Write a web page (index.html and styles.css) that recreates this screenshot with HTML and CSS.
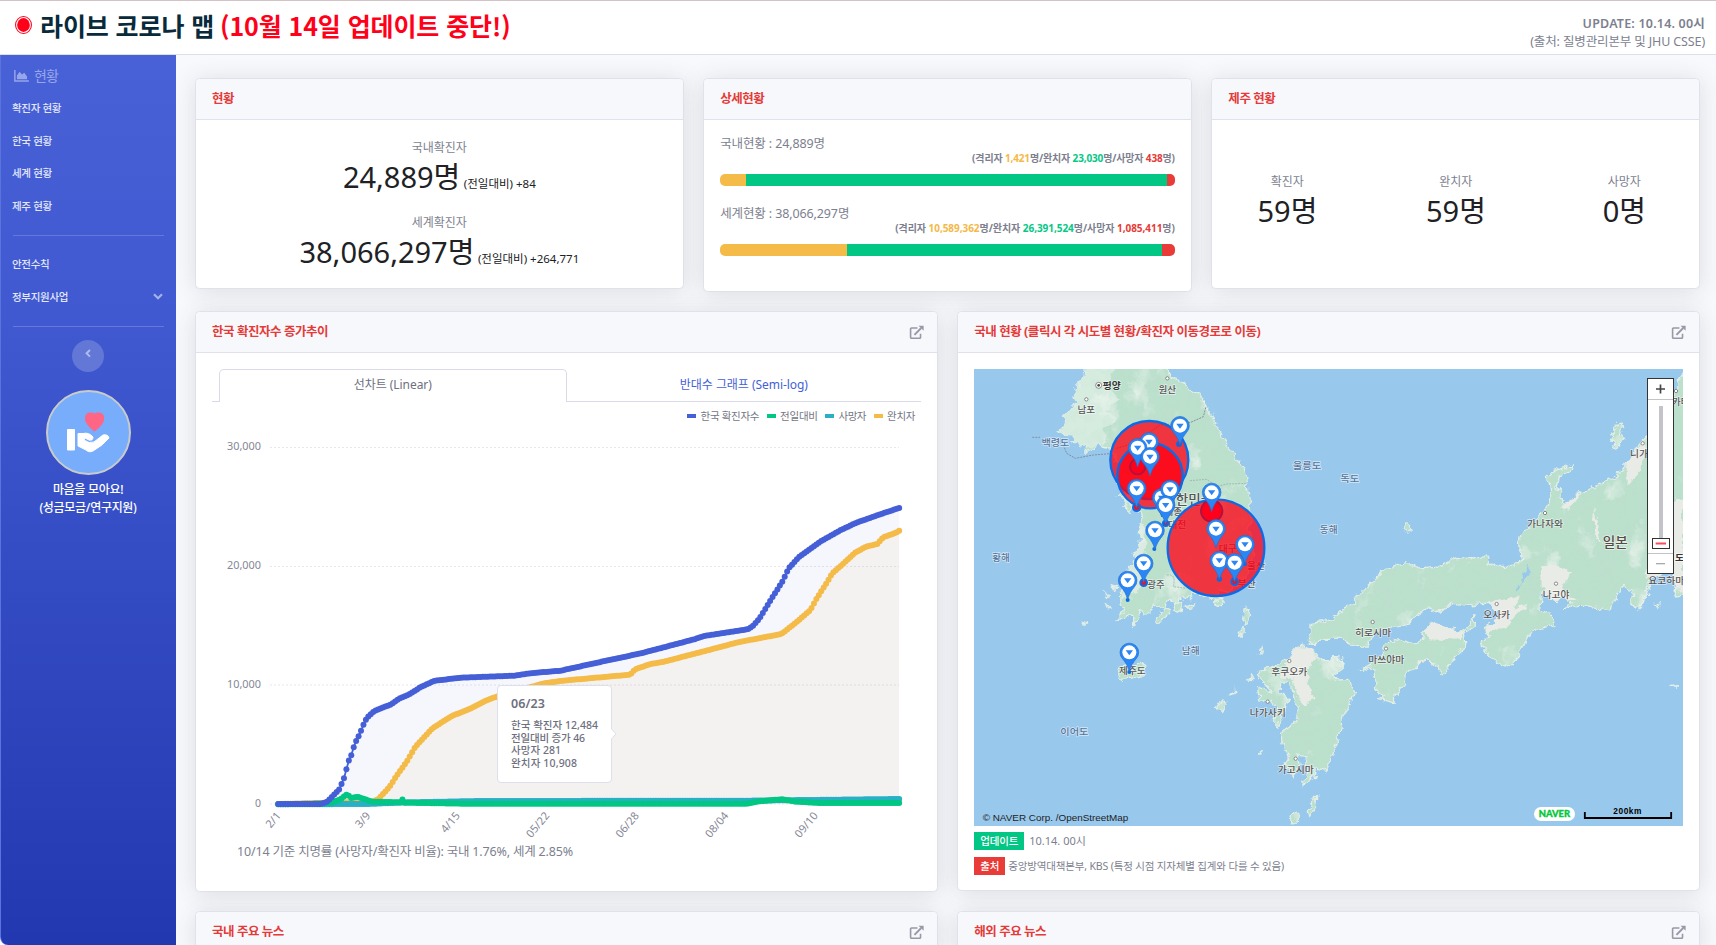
FILE: index.html
```html
<!DOCTYPE html>
<html lang="ko">
<head>
<meta charset="utf-8">
<title>라이브 코로나 맵</title>
<link rel="stylesheet" href="styles.css">
</head>
<body>
<svg width="0" height="0" class="defs">
  <symbol id="ext" viewBox="0 0 16 16"><path d="M9 3.2H2.7q-1 0-1 1v9q0 1 1 1h8.6q1 0 1-1V9.2" fill="none" stroke="currentColor" stroke-width="1.7"/><path d="M5.8 10.6 13 3.2" stroke="currentColor" stroke-width="2"/><path d="M10.2.8H15.6V6.2Z" fill="currentColor"/></symbol>
  <symbol id="pin" viewBox="-32 -32 64 96" overflow="visible"><path d="M0 58C-5 40-11 31-20 20A28 28 0 1 1 20 20C11 31 5 40 0 58Z" fill="#2a85f5" stroke="#2470c8" stroke-width="2"/><circle r="21" fill="#fff"/><path d="M-11-6H11L0 9Z" fill="#2a85f5"/></symbol>
</svg>
<header class="top">
  <h1><svg class="live" viewBox="0 0 16 17"><ellipse cx="8" cy="8.5" rx="7.5" ry="8" fill="none" stroke="#ff0019" stroke-width="1"/><ellipse cx="8" cy="8.5" rx="6" ry="6.5" fill="#ff0019"/></svg><span class="t1">라이브 코로나 맵</span><span class="t2">(10월 14일 업데이트 중단!)</span></h1>
  <div class="upd"><b>UPDATE: 10.14. 00시</b><span>(출처: 질병관리본부 및 JHU CSSE)</span></div>
</header>
<div class="wrap">
<nav class="side">
  <div class="nh"><svg viewBox="0 0 16 13"><path d="M0 0H1.6V11H16V12.6H0Z" fill="currentColor"/><path d="M3 10V6L6 2 8.5 5 11 3 14 7V10Z" fill="currentColor"/></svg>현황</div>
  <a>확진자 현황</a><a>한국 현황</a><a>세계 현황</a><a>제주 현황</a>
  <hr>
  <a>안전수칙</a><a class="more">정부지원사업<svg viewBox="0 0 10 7"><path d="M1 1.2 5 5.2 9 1.2" fill="none" stroke="currentColor" stroke-width="2.2"/></svg></a>
  <hr class="h2">
  <div class="tog"><svg viewBox="0 0 6 9"><path d="M5 1 1.6 4.3 5 7.6" fill="none" stroke="currentColor" stroke-width="2"/></svg></div>
  <svg class="give" viewBox="0 0 85 85"><circle cx="42.5" cy="42.5" r="41.5" fill="#77adfb" stroke="#c9cbca" stroke-width="2"/><path d="M21.500 39.500h7V60h-7z" fill="#fff" stroke="#fff" stroke-linejoin="round"/><path d="M32 43.500H37Q43 42 47 47Q47 51 43 50L39 48L38 50Q43 54 48 52L57 45Q62 44 63 48Q56 56 50 59Q44 64 40 60L32 56Z" fill="#fff" stroke="#fff" stroke-width="1" stroke-linejoin="round"/><path d="M48.500 41.500Q38 34 39 27Q40 22 45 22.500Q47 22.500 48.500 23.500Q50 22.500 52 22.500Q57 22 58.200 27Q59 34 48.500 41.500Z" fill="#ff6584"/></svg>
  <p>마음을 모아요!<br>(성금모금/연구지원)</p>
</nav>
<main>
  <div class="row r3">
    <section class="card c1"><h2>현황</h2><div class="tot">
      <small>국내확진자</small><div class="num"><span class="n">24,889</span><span class="k">명</span><span class="d">(전일대비) +84</span></div>
      <small class="s2">세계확진자</small><div class="num"><span class="n">38,066,297</span><span class="k">명</span><span class="d">(전일대비) +264,771</span></div>
    </div></section>
    <section class="card c2"><h2>상세현황</h2><div class="det">
      <div class="lb">국내현황 : <span>24,889</span>명</div>
      <div class="sub s1">(격리자 <i class="y">1,421</i>명/완치자 <i class="g">23,030</i>명/사망자 <i class="r">438</i>명)</div>
      <div class="bar"><i style="width:5.7%"></i><i style="width:92.5%"></i><i style="width:1.8%"></i></div>
      <div class="lb">세계현황 : <span>38,066,297</span>명</div>
      <div class="sub">(격리자 <i class="y">10,589,362</i>명/완치자 <i class="g">26,391,524</i>명/사망자 <i class="r">1,085,411</i>명)</div>
      <div class="bar"><i style="width:27.9%"></i><i style="width:69.2%"></i><i style="width:2.9%"></i></div>
    </div></section>
    <section class="card c1"><h2>제주 현황</h2><div class="jeju">
      <div><small>확진자</small><div class="num"><span class="n">59</span><span class="k">명</span></div></div>
      <div><small>완치자</small><div class="num"><span class="n">59</span><span class="k">명</span></div></div>
      <div><small>사망자</small><div class="num"><span class="n">0</span><span class="k">명</span></div></div>
    </div></section>
  </div>
  <div class="row r2">
    <section class="card big"><h2>한국 확진자수 증가추이<svg><use href="#ext"/></svg></h2>
      <div class="body">
        <div class="tabs"><b></b><span class="on">선차트 (Linear)</span><span>반대수 그래프 (Semi-log)</span></div>
        <svg class="chart" viewBox="212 402 710 436" id="chart">
          <g id="legend"></g><g id="plot"></g>
          <g id="tip"><path d="M501 685.500H608Q611.500 685.500 611.500 689V729L616 734L611.500 739V779Q611.500 782.500 608 782.500H501Q497.500 782.500 497.500 779V689Q497.500 685.500 501 685.500Z" fill="#fff" stroke="#dddfeb"/>
          <text x="511" y="708" class="tt" textLength="34">06/23</text>
          <text x="511" y="729" textLength="87">한국 확진자 12,484</text><text x="511" y="741.500" textLength="74">전일대비 증가 46</text><text x="511" y="754" textLength="50">사망자 281</text><text x="511" y="767" textLength="66">완치자 10,908</text></g>
        </svg>
        <p class="fat">10/14 기준 치명률 (사망자/확진자 비율): 국내 1.76%, 세계 2.85%</p>
      </div></section>
    <section class="card map"><h2><span class="w">국내 현황 (클릭시 각 시도별 현황/확진자 이동경로로 이동)</span><svg><use href="#ext"/></svg></h2>
      <div class="body">
      <svg class="mapv" viewBox="42 177 2127 1371">
        <defs>
          <filter id="rough" x="-5%" y="-5%" width="110%" height="110%"><feTurbulence type="fractalNoise" baseFrequency=".045" numOctaves="3" seed="4"/><feDisplacementMap in="SourceGraphic" scale="26" xChannelSelector="R" yChannelSelector="G"/></filter>
          <filter id="relief" x="0" y="0" width="100%" height="100%"><feTurbulence type="fractalNoise" baseFrequency=".012 .009" numOctaves="5" seed="9"/><feColorMatrix values="0 0 0 0 .91  0 0 0 0 .93  0 0 0 0 .9  4 0 0 0 -2.450"/></filter>
          <filter id="shade" x="0" y="0" width="100%" height="100%"><feTurbulence type="fractalNoise" baseFrequency=".03" numOctaves="4" seed="2"/><feColorMatrix values="0 0 0 0 .55  0 0 0 0 .75  0 0 0 0 .65  0 2 0 0 -.9"/></filter>
          <path id="land" d="M380 165L375 200L350 225L342 262L352 278L335 290L312 318L322 330L310 350L290 362L310 372L345 375L330 395L355 395L365 415L385 400L372 428L400 415L410 398L430 410L450 415L460 440L480 470L470 510L500 540L470 560L500 565L490 590L510 610L520 590L540 610L545 640L535 670L550 680L530 700L545 712L520 730L525 755L505 770L510 790L490 800L495 830L478 850L480 880L490 905L470 930L490 925L515 915L515 945L530 935L545 900L555 920L575 905L580 880L610 900L625 870L650 880L660 860L680 870L700 850L730 850L760 870L780 865L775 840L800 845L830 830L850 810L870 770L885 740L870 710L880 690L865 660L872 620L870 570L860 520L850 480L820 430L785 380L760 330L735 275L690 235L670 215L640 205L615 165Z
          M470 1098L482 1073L515 1062L550 1060L562 1072L545 1095L515 1104L482 1108Z M852 900L873 893L868 925L855 945L848 930Z M838 965L853 948L852 970L842 980Z
          M1000 1020L1030 1003L1055 1015L1070 1040L1100 1055L1125 1042L1150 1048L1145 1085L1120 1095L1135 1110L1165 1108L1185 1150L1165 1190L1145 1220L1135 1280L1115 1340L1100 1380L1070 1370L1065 1400L1025 1425L1042 1390L1035 1340L1012 1335L1018 1375L1000 1400L975 1370L985 1340L965 1290L965 1270L990 1250L1010 1225L1015 1190L1000 1150L985 1118L962 1120L960 1145L985 1165L975 1200L955 1250L940 1230L950 1200L930 1170L900 1170L895 1130L925 1140L940 1150L910 1115L888 1100L900 1080L925 1075L960 1060L985 1045Z
          M1048 1000L1050 940L1090 935L1115 930L1150 895L1170 885L1225 825L1270 780L1310 765L1340 758L1360 775L1440 768L1490 745L1540 750L1580 735L1590 758L1615 770L1660 768L1685 745L1675 700L1695 660L1740 620L1765 580L1772 540L1762 500L1780 485L1840 462L1830 482L1795 505L1788 530L1805 540L1802 570L1830 580L1855 550L1920 525L1965 500L2010 450L2035 400L2070 370L2140 300L2150 230L2169 177H2190V850L2145 855L2150 820L2130 775L2100 795L2075 800L2060 850L2050 880L2030 900L2015 880L2018 840L1990 830L1965 870L1945 900L1900 890L1860 885L1830 895L1810 895L1840 878L1800 862L1790 880L1770 860L1745 850L1740 895L1780 920L1788 945L1740 955L1700 985L1675 1040L1650 1068L1610 1060L1570 1015L1565 1000L1585 980L1570 955L1600 940L1620 910L1580 880L1520 885L1480 880L1440 910L1400 895L1340 940L1300 950L1240 970L1225 1005L1190 1010L1140 985L1090 985L1070 1000Z
          M1290 990L1310 985L1345 1000L1380 995L1390 965L1420 940L1470 955L1510 965L1515 1015L1470 1055L1452 1100L1430 1070L1400 1050L1365 1070L1340 1085L1335 1120L1310 1145L1305 1178L1262 1170L1268 1155L1242 1140L1250 1105L1235 1070L1200 1082L1235 1060L1270 1025Z
          M1515 960L1545 910L1542 950L1525 963Z M1980 340L1985 350L1978 375L1990 385L1978 405L1958 415L1962 395L1955 370Z M1333 655Q1335 643 1345 645Q1356 650 1352 665Q1338 668 1333 655Z M986 1523L1000 1508L1018 1520L1012 1540L995 1538Z M1055 1470L1070 1460L1066 1490L1050 1520L1045 1505Z M768 1195L780 1175L800 1180L785 1198Z M813 1155L825 1138L833 1146Z M896 1020L905 1012L910 1026L900 1032Z M895 1335L910 1320L902 1335Z M866 1110L880 1090L875 1112Z M590 930L610 900L630 905L600 940Z M640 880L665 875L660 905L645 900Z M680 890L700 882L695 900Z M755 880L785 865L778 890Z M435 850L448 858L440 864Z M440 880L455 890L445 896Z M455 825L470 830L465 842Z M370 935L378 938L372 942Z M2085 880L2100 885L2094 895Z M2135 1125L2150 1130L2145 1135Z"/>
          <clipPath id="lc"><use href="#land"/></clipPath>
        </defs>
        <rect x="42" y="177" width="2127" height="1371" fill="#99c8ed"/>
        <g filter="url(#rough)">
          <use href="#land" fill="#bbe0cc" stroke="#e2eee6" stroke-width="4"/>
          <g clip-path="url(#lc)">
            <path d="M320 170H470L440 220L480 270L440 300L470 330L430 350L440 400L300 430Z" fill="#d5ecdf"/>
            <path d="M450 400L500 560L530 700L480 870L540 840L560 700L530 560Z" fill="#dcebe2"/>
            <rect x="42" y="177" width="2127" height="1371" filter="url(#relief)" opacity=".75"/>
            <rect x="42" y="177" width="2127" height="1371" filter="url(#shade)" opacity=".3"/>
            <g fill="#e9ebe6"><path d="M1000 1020L1050 1000L1070 1050L1040 1090L1060 1160L1030 1190L1010 1150L1000 1110L960 1100Z"/><path d="M1745 770L1800 765L1840 790L1800 830L1850 870L1750 870Z"/><path d="M1570 880L1680 860L1660 900L1700 880L1640 950L1570 970L1600 920Z"/><path d="M2080 600L2169 560V850L2060 800Z"/><path d="M1800 590L1860 545L1830 600Z"/><path d="M2000 460L2060 380L2040 480L2000 530Z"/><path d="M1905 590L1925 700L1900 670Z"/><path d="M1390 960L1430 935L1510 970L1500 990L1410 985Z"/><path d="M1370 1055L1400 1048L1430 1060L1380 1065Z"/><path d="M1300 960L1450 890L1480 880L1350 960Z"/></g>
          </g>
          <path d="M1685 820L1690 790L1706 772L1705 795L1688 815L1672 845L1665 838Z" fill="#99c8ed"/>
        </g>
        <path d="M217 382H240M310 405L320 430L346 445L400 435L450 431M470 415L520 400L600 345L690 338L730 320L738 290" fill="none" stroke="#8090a0" stroke-width="3" stroke-dasharray="6 3"/>
        <path d="M690 512L740 508L770 530L800 522L862 520M620 795Q650 790 640 830L680 835" fill="none" stroke="#9ab5a8" stroke-width="2.500" stroke-dasharray="6 3"/>
        <g id="labels"></g>
        <g id="zones"></g>
        <g id="pins"></g>
        <g class="ctl"><rect x="2062.500" y="205.500" width="78" height="585" fill="#fff" stroke="#333" stroke-width="3"/><path d="M2064 268.500H2139M2064 730.500H2139" stroke="#c4c4c8" stroke-width="3"/><path d="M2088 237H2115M2101.500 223.500V250.500" stroke="#444" stroke-width="5"/><path d="M2088 761H2115" stroke="#aaa" stroke-width="4"/><rect x="2097" y="288" width="12" height="400" fill="#c2c4c9"/><rect x="2077.500" y="685.500" width="51" height="30" fill="#fff" stroke="#333" stroke-width="3"/><path d="M2087 700.500H2118" stroke="#ff4b58" stroke-width="6"/></g>
        <text class="copy" x="68" y="1532" textLength="437" lengthAdjust="spacingAndGlyphs">© NAVER Corp. /OpenStreetMap</text>
        <rect x="1722" y="1491" width="123" height="42" rx="21" fill="#fff"/>
        <text class="nav" x="1736" y="1521" textLength="94" lengthAdjust="spacingAndGlyphs">NAVER</text>
        <text class="km" x="2002" y="1511" text-anchor="middle" textLength="84">200km</text>
        <path d="M1874.500 1506V1524H2133.500V1506" fill="none" stroke="#000" stroke-width="5.500"/>
      </svg>
      <div class="src"><b class="ok">업데이트</b><span class="a">10.14. 00시</span></div>
      <div class="src"><b class="bad">출처</b><span>중앙방역대책본부, KBS (특정 시점 지자체별 집계와 다를 수 있음)</span></div>
      </div></section>
  </div>
  <div class="row last">
    <section class="card news"><h2>국내 주요 뉴스<svg><use href="#ext"/></svg></h2></section>
    <section class="card news"><h2>해외 주요 뉴스<svg><use href="#ext"/></svg></h2></section>
  </div>
</main>
</div>
<script src="app.js"></script>
</body>
</html>
```

FILE: styles.css
```css
*{box-sizing:border-box}
body{margin:0;height:945px;overflow:hidden;background:#f8f9fc;color:#7d7f8f;font-family:"Noto Sans","Noto Sans CJK KR",sans-serif;font-size:12px;line-height:18px}
.defs{position:absolute}
h1,h2,p{margin:0}
i{font-style:normal}
.top{height:55px;background:#fff;border-top:1px solid #d3c3c4;border-bottom:1px solid #dddfeb;display:flex;justify-content:space-between;padding:0 11px 0 15px}
.top h1{display:flex;align-items:center;height:48px;font:700 25px/48px "Noto Sans CJK KR",sans-serif;letter-spacing:-.1px;white-space:nowrap}
.live{width:17px;height:18px;margin-right:8px}
.t1{color:#082a3a;margin-right:6px}
.t2{color:#ff0019}
.upd{display:flex;flex-direction:column;text-align:right;padding-top:14px;white-space:nowrap;font-size:12.500px}
.upd b{font-weight:600;letter-spacing:.2px}
.upd span{letter-spacing:-.13px}
.wrap{display:flex;height:890px}
.side{width:176px;flex:none;background:linear-gradient(#4861d7,#4059d0 30%,#2238b0);border-left:1px solid #5b74dd;border-bottom-left-radius:8px;color:#e3e7fa;padding:11px 12px 0 11px}
.nh{display:flex;align-items:center;gap:5px;font-size:14px;height:20px;color:#97a5ea;letter-spacing:-.9px;margin-bottom:6px;padding-left:2px}
.nh svg{width:15px;height:12px}
.side a{display:flex;align-items:center;justify-content:space-between;height:32.6px;font-size:10.500px;font-weight:500;letter-spacing:-.3px}
.more svg{width:10px;height:7px;color:#a5b1ea;margin-right:1px}
.side hr{border:0;border-top:1px solid #6679d9;margin:12.500px 0 12px 1px}
.side .h2{margin:12.500px 0 13px 1px}
.tog{width:32px;height:32px;border-radius:50%;background:#6277d6;margin:0 auto;display:flex;justify-content:center;padding:9.500px 0;color:#aebaf0}
.tog svg{width:6px;height:9px}
.give{display:block;width:85px;height:85px;margin:18px auto 6px}
.side p{text-align:center;color:#fff;font-size:12px;font-weight:500;line-height:18px;letter-spacing:-.3px}
main{flex:1;min-width:0;padding:23px 16px 0 19px;display:flex;flex-direction:column;overflow:hidden}
.row{display:grid;column-gap:19.500px;flex:none;align-items:start}
.r3{grid-template-columns:repeat(3,minmax(0,1fr));height:233px}
.r2{grid-template-columns:repeat(2,minmax(0,1fr));height:600px}
.last{grid-template-columns:repeat(2,minmax(0,1fr));height:34px}
.card{background:#fff;border:1px solid #dfe1ed;border-radius:4.500px;box-shadow:0 2px 23px rgba(58,59,69,.15)}
.card h2{height:41px;background:#f7f8fc;border-bottom:1px solid #dfe1ed;border-radius:4px 4px 0 0;padding:0 13px 0 16px;display:flex;align-items:center;justify-content:space-between;font-size:12.500px;font-weight:700;letter-spacing:-.45px;color:#e53a37}
.card h2 svg{width:15px;height:15px;color:#9799a6}
.c1{height:211px}.c2{height:214px}
small{display:block;font-size:12px;line-height:18px;letter-spacing:-.05px}
.tot{text-align:center;padding-top:19px}
.num{height:43px;line-height:43px;margin-top:-2px;color:#202124;white-space:nowrap;display:flex;justify-content:center;align-items:baseline}
.n{font-size:29px;letter-spacing:0}
.k{font-size:29px;letter-spacing:-.5px}
.d{font-size:11.500px;letter-spacing:0;margin-left:4px}
.s2{margin-top:16px}
.det{padding:15px 16px 0;white-space:nowrap}
.lb{font-size:12.500px;height:18px;letter-spacing:-.12px}
.sub{text-align:right;font-size:10px;font-weight:700;height:13px;line-height:11px;letter-spacing:-.05px}
.s1{letter-spacing:-.15px}
.y{color:#f4b947}.g{color:#05c786}.r{color:#e53a37}
.bar{height:12px;margin:8px 0 18.500px;border-radius:5px;overflow:hidden;display:flex}
.bar i:nth-child(1){background:#f5bb48}.bar i:nth-child(2){background:#02c684}.bar i:nth-child(3){background:#e93b37}
.jeju{display:grid;grid-template-columns:repeat(3,168.500px);justify-content:center;text-align:center;padding-top:53px}
.big{height:581px}.map{height:580px}
.body{padding:16px 16px 0}
.tabs{display:grid;grid-template-columns:6.500px 348.500px 1fr;height:33px;text-align:center;line-height:32px;font-size:12px;color:#6e707e;letter-spacing:-.05px}
.tabs>*{border-bottom:1px solid #dad9e8}
.tabs .on{border:1px solid #dad9e8;border-bottom:0;border-radius:5px 5px 0 0;line-height:30px}
.tabs span:last-child{color:#435fd7}
.chart{display:block;width:710px;height:436px;overflow:visible}
.chart text{font-size:11px;fill:#858796}
#legend text{font-size:10.500px;fill:#747684}
#tip text{font-size:10.500px;font-weight:500;fill:#6e707e}
#tip .tt{font-size:12.500px;font-weight:600}
.fat{margin:5px 0 0 25px;font-size:12.500px;letter-spacing:-.18px}
.mapv{display:block;width:709px;height:457px}
.mapv text{font-family:"Noto Sans CJK KR",sans-serif}
.mapv .copy{font:29px "Liberation Sans",Arial,sans-serif;fill:#222}
.mapv .nav{font:900 28px Lato,sans-serif;fill:#03c73c;stroke:#03c73c;stroke-width:1}
.mapv .km{font:700 25px "Liberation Sans",Arial,sans-serif}
.src{display:flex;align-items:center;height:18px;margin:6px 0 7px;font-size:10.500px;letter-spacing:-.16px;white-space:nowrap}
.src b{color:#fff;height:18px;line-height:18px;font-weight:500;padding:0 6px;margin-right:3px}
.ok{background:#02c684}.bad{background:#e93b37}
.src .a{margin-left:2px;font-size:11px;letter-spacing:0}
```

FILE: app.js
```js
const NS = 'http://www.w3.org/2000/svg';
function el(parent, name, attrs, text) {
  const e = document.createElementNS(NS, name);
  for (const k in attrs) e.setAttribute(k, attrs[k]);
  if (text) e.textContent = text;
  parent.appendChild(e);
  return e;
}
const $ = id => document.getElementById(id);

// Chart: axis, series and legend
const plot = $('plot');
[[30000, 447.5, '30,000', 34], [20000, 566.5, '20,000', 34], [10000, 685, '10,000', 34], [0, 804, '0', 6]].forEach(([, y, t, w]) => {
  el(plot, 'line', { x1: 270, x2: 899, y1: y, y2: y, stroke: '#e6e7ee', 'stroke-dasharray': '2 2' });
  el(plot, 'text', { x: 261 - w, y: y + 2.5, textLength: w, lengthAdjust: 'spacingAndGlyphs' }, t);
});
const series = {
  cured: [182,612,375,605,388,598,412,560,425,530,447,485,465,440,500,385,540,348,575,328,610,302,632,290,730,250,770,242,908,224,918,208,950,192,975,186,1060,154,1130,127,1180,113,1220,102,1250,68,1280,30,1293,-5,1315,-55,1325,-80,1350,-112,1372,-142,1395,-160,1418,-168,1430,-188,1455,-201,1463,-208],
  death: [182,613,365,612,450,607,600,603,1150,602,1463,597],
  daily: [182,613,283,610,295,606,310,598,324,583,333,594,345,590,360,597,375,605,436,607,438,598,441,608,560,611,1150,611,1170,605,1200,600,1222,598,1250,605,1300,609,1463,609],
  total: [182,612,270,612,283,605,310,565,313,550,319,530,324,500,328,480,334,462,338,440,343,422,349,405,354,388,359,370,365,353,380,333,415,313,430,297,450,285,475,262,505,242,560,233,670,227,700,220,765,212,840,188,930,160,1040,118,1060,108,1150,88,1160,80,1175,55,1200,-5,1222,-55,1235,-95,1257,-130,1300,-175,1340,-208,1375,-232,1410,-250,1440,-265,1463,-276]
};
function sample(a) {
  const out = [];
  for (let d = 0; d <= 255; d++) {
    const x = 182 + d * 1281 / 255;
    let i = 0;
    while (i < a.length - 4 && a[i + 2] < x) i += 2;
    const t = Math.min(1, (x - a[i]) / (a[i + 2] - a[i]));
    out.push([190 + x / 2.063, 600 + (a[i + 1] + t * (a[i + 3] - a[i + 1])) / 3]);
  }
  return out;
}
const total = sample(series.total), cured = sample(series.cured);
const area = (p, fill) => el(plot, 'path', { d: 'M' + p.map(q => q.join()).join('L') + 'L899 804L278 804Z', fill });
area(total, 'rgba(78,115,223,.055)');
area(cured, 'rgba(246,185,70,.07)');
[[cured, '#f5bb48'], [sample(series.death), '#29b0c4'], [sample(series.daily), '#02c684'], [total, '#455fd7']].forEach(([p, c]) => {
  el(plot, 'path', { d: 'M' + p.map(q => q.join()).join('L'), fill: 'none', stroke: c, 'stroke-width': 1.8 });
  p.forEach(([x, y]) => el(plot, 'circle', { cx: x, cy: y, r: 3, fill: c }));
});
['2/1', '3/9', '4/15', '05/22', '06/28', '08/04', '09/10'].forEach((t, i) =>
  el(plot, 'text', { transform: `translate(${281.5 + i * 89.5} 816) rotate(-50)`, 'text-anchor': 'end' }, t));
[[687, '#455fd7', 700.5, 59, '한국 확진자수'], [767, '#02c684', 780, 38, '전일대비'], [825, '#29b0c4', 838.5, 28, '사망자'], [874, '#f5bb48', 887, 28.5, '완치자']].forEach(([x, c, tx, w, t]) => {
  el($('legend'), 'rect', { x, y: 414, width: 9, height: 4, fill: c });
  el($('legend'), 'text', { x: tx, y: 420, textLength: w }, t);
});

// Map labels: text, centre x, centre y, width, colour, weight
const city = '#555', sea = '#54749a';
[['평양',455,228,54,'#333',700],['원산',622,238,53,city],['남포',379,299,53,city],['백령도',286,397,83,sea],['울릉도',1041,468,86,sea],['독도',1169,507,57,sea],['동해',1106,658,53,sea],['황해',123,742,52,sea],['광주',588,823,52,city],['대한민국',685,568,150,'#555',500,38],['대전',652,643,54,city],['대구',803,716,54,city],['울산',888,768,54,city],['부산',860,821,54,city],['세종',640,606,54,city],['남해',692,1023,53,sea],['제주도',517,1081,80,city],['이어도',343,1266,84,sea],['후쿠오카',988,1085,108,city],['나가사키',923,1207,108,city],['가고시마',1007,1378,108,city],['히로시마',1239,967,108,city],['마쓰야마',1279,1048,108,city],['오사카',1610,914,80,city],['나고야',1788,853,80,city],['가나자와',1755,641,108,city],['일본',1966,696,75,'#5a4a44',500,40],['니가타',2050,432,80,city],['요코하마',2119,812,108,city],['도쿄',2172,744,54,'#333',700],['카타',2162,274,50,city]].forEach(([t, x, y, w, c, wt, s]) =>
  el($('labels'), 'text', { x: x - w / 2, y: y + (s || 29) * .36, textLength: w, lengthAdjust: 'spacingAndGlyphs', 'font-size': s || 29, 'font-weight': wt || 500, fill: c, stroke: 'rgba(255,255,255,.6)', 'stroke-width': 4, 'paint-order': 'stroke' }, t));
[[416,226],[622,205],[379,268],[988,1053],[923,1175],[1007,1346],[1238,936],[1278,1016],[1610,882],[1788,821],[1755,609],[2048,400],[2148,243]].forEach(([x, y], i) => {
  el($('labels'), 'circle', { cx: x, cy: y, r: i ? 5 : 9, fill: '#fff', stroke: '#777', 'stroke-width': 2.5 });
  if (!i) el($('labels'), 'circle', { cx: x, cy: y, r: 4, fill: '#444' });
});
// Case-count circles
[[568,450,117],[570,497,98],[768,713,145]].forEach(([x, y, r]) =>
  el($('zones'), 'circle', { cx: x, cy: y, r, fill: 'rgba(255,0,20,.76)', stroke: '#0b6be6', 'stroke-width': 7 }));
[[755,603,32],[533,470,23]].forEach(([x, y, r]) =>
  el($('zones'), 'circle', { cx: x, cy: y, r, fill: '#ff001c', stroke: '#b0143c', 'stroke-width': 6 }));
[[530,592,11],[617,640,8],[583,717,3],[551,818,10],[503,870,3],[778,807,5],[824,815,10],[657,402,6],[508,1086,3],[855,762,3]].forEach(([x, y, r]) =>
  el($('zones'), 'circle', { cx: x, cy: y, r, fill: '#e8142c', stroke: '#0b6be6', 'stroke-width': 6 }));
[[660,347],[567,395],[533,413],[570,440],[530,535],[605,563],[630,538],[617,585],[755,547],[585,661],[768,656],[855,703],[778,751],[824,758],[551,760],[503,811],[508,1027]].forEach(([x, y]) =>
  el($('pins'), 'use', { href: '#pin', x: x - 32, y: y - 32, width: 64, height: 96 }));
```
